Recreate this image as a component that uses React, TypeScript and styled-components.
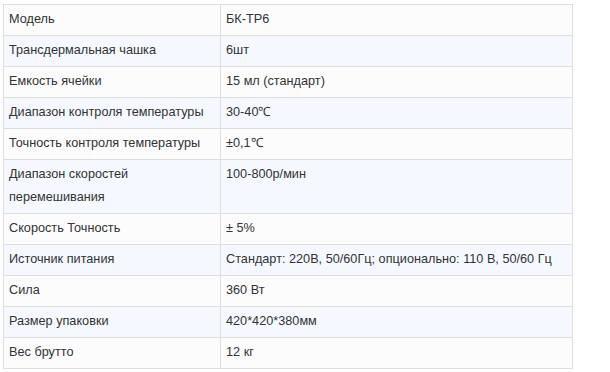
import React from "react"
import styled, { createGlobalStyle } from "styled-components"

const GlobalStyle = createGlobalStyle`
  body {
    margin: 0;
    background: #fff;
    font-family: "Liberation Sans", Arial, sans-serif;
  }
`

const Page = styled.div`
  padding: 4px 0 0 3px;
`

const SpecTable = styled.table`
  border-collapse: collapse;
  width: 570px;
  table-layout: fixed;
  font-size: 12.7px;
  color: #333;
`

const Row = styled.tr<{ $alt: boolean }>`
  background: ${(p) => (p.$alt ? "#f5f9ff" : "#fcfcfc")};
`

const Cell = styled.td<{ $w?: number }>`
  border: 1px solid #ddd;
  padding: 3px 5px 4px 5px;
  line-height: 23px;
  vertical-align: top;
  ${(p) => (p.$w ? `width: ${p.$w}px;` : "")}
`

const rows: [string, string][] = [
  ["Модель", "БК-ТР6"],
  ["Трансдермальная чашка", "6шт"],
  ["Емкость ячейки", "15 мл (стандарт)"],
  ["Диапазон контроля температуры", "30-40℃"],
  ["Точность контроля температуры", "±0,1℃"],
  ["Диапазон скоростей перемешивания", "100-800р/мин"],
  ["Скорость Точность", "± 5%"],
  ["Источник питания", "Стандарт: 220В, 50/60Гц; опционально: 110 В, 50/60 Гц"],
  ["Сила", "360 Вт"],
  ["Размер упаковки", "420*420*380мм"],
  ["Вес брутто", "12 кг"],
]

const App = () => {
  return (
    <Page>
      <GlobalStyle />
      <SpecTable>
        <tbody>
          {rows.map(([name, value], i) => (
            <Row key={name} $alt={i % 2 === 1}>
              <Cell $w={206}>{name}</Cell>
              <Cell>{value}</Cell>
            </Row>
          ))}
        </tbody>
      </SpecTable>
    </Page>
  )
}

export default App
